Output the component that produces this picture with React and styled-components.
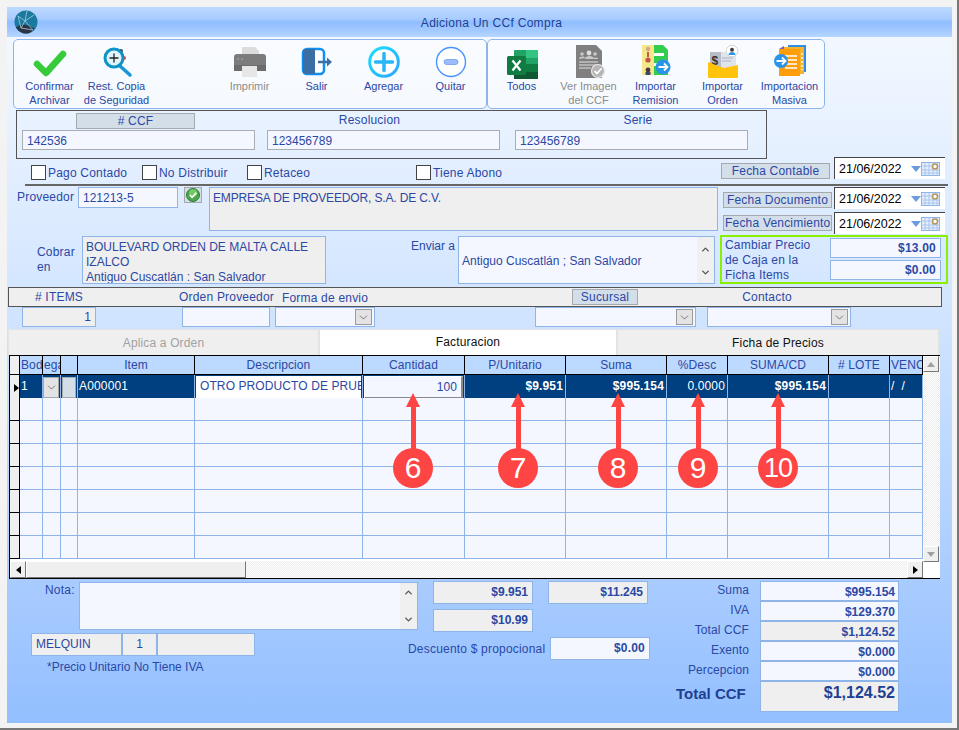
import React from "react";
import styled, { createGlobalStyle, css } from "styled-components";
import { ChevronDown, ChevronUp } from "lucide-react";

const BLUE_TEXT = "#2b48a4";
const FIELD_LINE = "#8fb4e8";
const FIELD_BG = "#f4f7ff";
const GRAY_BG = "#efefef";

const GlobalStyle = createGlobalStyle`
  html, body {
    margin: 0;
    padding: 0;
    background: #f3f3f3;
  }
  * {
    box-sizing: border-box;
  }
`;

const Page = styled.div`
  width: 959px;
  height: 730px;
  padding: 7px 0 0 7px;
  border-right: 2px solid #777;
  border-bottom: 2px solid #777;
  font-family: "Liberation Sans", Arial, sans-serif;
  font-size: 12px;
  color: ${BLUE_TEXT};
  overflow: hidden;
`;

const Win = styled.div`
  width: 945px;
  height: 716px;
  background: linear-gradient(180deg, #f6faff 0%, #cfe3ff 45%, #93bfff 100%);
  display: flex;
  flex-direction: column;
`;

const TitleBar = styled.div`
  height: 30px;
  flex: none;
  display: flex;
  align-items: center;
  padding: 0 0 0 7px;
  background: linear-gradient(180deg, #bddaff 0%, #a9cdff 38%, #8fbeff 50%, #a4caff 80%, #b6d6ff 100%);
  svg {
    flex: none;
  }
`;

const TitleText = styled.div`
  flex: 1;
  text-align: center;
  margin-left: -7px;
  padding-top: 1px;
  color: #1f3f92;
  font-size: 12px;
  letter-spacing: 0.3px;
`;

const Toolbar = styled.div`
  display: flex;
  flex: none;
  margin: 2px 0 0 6px;
  height: 70px;
`;

const ToolGroup = styled.div`
  width: ${(p) => p.$w}px;
  height: 70px;
  display: flex;
  padding: 5px 0 0 ${(p) => p.$pad}px;
  background: rgba(255, 255, 255, 0.55);
  border: 1px solid ${FIELD_LINE};
  border-radius: 5px;
`;

const ToolButton = styled.div`
  width: 67px;
  margin-left: ${(p) => p.$skip || 0}px;
  display: flex;
  flex-direction: column;
  align-items: center;
  text-align: center;
  font-size: 11px;
  line-height: 14px;
  color: ${(p) => (p.$off ? "#8c8c8c" : BLUE_TEXT)};
  white-space: pre-line;
  svg {
    display: block;
    width: 34px;
    height: 34px;
    flex: none;
  }
`;

const CcfBox = styled.div`
  flex: none;
  width: 751px;
  height: 49px;
  margin: 1px 0 0 9px;
  padding: 2px 0 0 5px;
  border: 1px solid #555;
  display: grid;
  grid-template-columns: 233px 233px 233px;
  column-gap: 12px;
`;

const CcfCol = styled.div`
  margin-left: ${(p) => p.$shift || 0}px;
  margin-right: -${(p) => p.$shift || 0}px;
  display: flex;
  flex-direction: column;
  align-items: center;
`;

const Tag = styled.div`
  width: ${(p) => (p.$w ? `${p.$w}px` : "auto")};
  height: ${(p) => p.$h || 16}px;
  flex: none;
  background: #d3dee9;
  border: 1px solid #a4a9ae;
  text-align: center;
  line-height: ${(p) => (p.$h || 16) - 2}px;
  font-size: 12px;
  white-space: nowrap;
  letter-spacing: 0.2px;
  overflow: hidden;
`;

const CcfTag = styled(Tag)`
  margin-right: 6px;
`;

const PlainHead = styled.div`
  height: 16px;
  line-height: 15px;
  flex: none;
  letter-spacing: 0.2px;
  margin-left: ${(p) => (p.$nudge > 0 ? p.$nudge : 0)}px;
  margin-right: ${(p) => (p.$nudge < 0 ? -p.$nudge : 0)}px;
`;

const Field = styled.div`
  width: ${(p) => (p.$w ? `${p.$w}px` : "100%")};
  height: ${(p) => p.$h || 20}px;
  flex: none;
  background: ${(p) => (p.$gray ? GRAY_BG : FIELD_BG)};
  border: 1px solid ${(p) => (p.$plain ? "#a9adb3" : FIELD_LINE)};
  padding: ${(p) => (p.$low ? 1 : 0)}px ${(p) => p.$pad ?? 4}px 0;
  line-height: ${(p) => (p.$h || 20) - 2}px;
  text-align: ${(p) => (p.$right ? "right" : p.$center ? "center" : "left")};
  font-weight: ${(p) => (p.$bold ? 700 : 400)};
  white-space: nowrap;
  overflow: hidden;
`;

const CcfInput = styled(Field)`
  margin-top: 1px;
  font-size: 12px;
`;

const NameBox = styled(Field)`
  line-height: 20px;
  padding-left: 3px;
  letter-spacing: -0.15px;
`;

const ChecksRow = styled.div`
  flex: none;
  height: 25px;
  padding-left: 24px;
  display: grid;
  grid-template-columns: 111px 105px 169px 305px 113px 111px;
  align-items: start;
`;

const Check = styled.div`
  display: flex;
  align-items: center;
  gap: 2px;
  margin-top: 6px;
  letter-spacing: 0.2px;
  white-space: nowrap;
  &::before {
    content: "";
    width: 13px;
    height: 13px;
    flex: none;
    background: #fff;
    border: 1px solid #444;
  }
`;

const DateWrap = styled.div`
  width: 111px;
  height: 22px;
  margin-top: ${(p) => p.$top || 0}px;
  flex: none;
  background: #fff;
  border-top: 1px solid #444;
  border-left: 1px solid #444;
  padding-left: 4px;
  display: flex;
  align-items: center;
  color: #000;
  font-size: 12.5px;
  white-space: nowrap;
`;

const DateIcons = styled.div`
  margin-left: 9px;
  display: flex;
  align-items: center;
  svg {
    display: block;
    flex: none;
  }
`;

const FormArea = styled.div`
  flex: none;
  margin-left: 18px;
  width: 923px;
  border-top: 2px solid #666;
`;

const ProvRow = styled.div`
  margin-left: -18px;
  width: 941px;
  height: 49px;
  padding: 1px 0 0 10px;
  display: flex;
  align-items: flex-start;
`;

const ProvLabel = styled.div`
  width: 61px;
  flex: none;
  letter-spacing: 0.2px;
  padding-top: 3px;
`;

const OkButton = styled.div`
  width: 18px;
  height: 16px;
  margin: 0 7px 0 6px;
  flex: none;
  background: #d3dee9;
  border: 1px solid #a4a9ae;
  display: flex;
  align-items: flex-start;
  justify-content: center;
`;

const FechaCol = styled.div`
  margin-left: 5px;
  width: 222px;
  flex: none;
  display: grid;
  grid-template-columns: 109px 111px;
  column-gap: 2px;
  align-items: start;
`;

const FechaTag = styled(Tag)`
  margin-top: ${(p) => p.$top}px;
  padding: 0 1px;
`;

const AddrRow = styled.div`
  flex: none;
  height: 52px;
  padding: 1px 0 0 30px;
  display: flex;
  align-items: flex-start;
`;

const CobrarLabel = styled.div`
  width: 45px;
  flex: none;
  padding-top: 9px;
  line-height: 15px;
  white-space: pre-line;
  letter-spacing: 0.2px;
`;

const AddrBox = styled.div`
  width: ${(p) => p.$w}px;
  height: 48px;
  flex: none;
  overflow: hidden;
  background: ${(p) => (p.$gray ? GRAY_BG : FIELD_BG)};
  border: 1px solid ${FIELD_LINE};
  padding: ${(p) => p.$top || 1}px 3px 0;
  line-height: 15px;
  display: flex;
  justify-content: space-between;
`;

const EnviarLabel = styled.div`
  width: 47px;
  margin-left: 85px;
  padding-top: 3px;
  flex: none;
`;

const UpDown = styled.div`
  width: ${(p) => p.$w || 17}px;
  flex: none;
  align-self: stretch;
  margin: -${(p) => p.$top || 0}px -3px 0 0;
  background: #f0f0f0;
  display: flex;
  flex-direction: column;
  justify-content: space-between;
  align-items: center;
  padding: 7px 0 5px;
  color: #555;
`;

const GreenBox = styled.div`
  width: 228px;
  height: 49px;
  margin: -1px 0 0 5px;
  flex: none;
  border: 2px solid #88f000;
  padding: 1px 5px 0 3px;
  display: grid;
  grid-template-columns: 105px 111px;
  line-height: 15px;
  letter-spacing: 0.2px;
`;

const PriceCol = styled.div`
  display: flex;
  flex-direction: column;
  gap: 2px;
`;

const HeadBar = styled.div`
  flex: none;
  width: 934px;
  height: 20px;
  margin: 0 0 0 1px;
  background: ${GRAY_BG};
  border: 1px solid #555;
  display: flex;
  letter-spacing: 0.2px;
  white-space: nowrap;
`;

const BarHead = styled.div`
  width: ${(p) => p.$w}px;
  margin-left: ${(p) => p.$left || 0}px;
  flex: none;
  padding-top: ${(p) => p.$top ?? 2}px;
  text-align: center;
`;

const BarTag = styled(Tag)`
  margin: 1px 0 0 195px;
`;

const InputsRow = styled.div`
  flex: none;
  height: 22px;
  display: flex;
  padding-left: 15px;
`;

const Combo = styled.div`
  width: ${(p) => p.$w}px;
  height: ${(p) => p.$h || 20}px;
  margin-left: ${(p) => p.$left || 0}px;
  flex: none;
  background: ${FIELD_BG};
  border: 1px solid ${FIELD_LINE};
  display: flex;
  justify-content: flex-end;
  align-items: center;
  padding-right: 2px;
`;

const ComboButton = styled.div`
  width: 17px;
  height: 16px;
  background: #e3e3e3;
  border: 1px solid #9a9a9a;
  color: #444;
  display: flex;
  align-items: center;
  justify-content: center;
`;

const Tabs = styled.div`
  flex: none;
  height: 26px;
  margin-left: 1px;
  display: flex;
`;

const Tab = styled.div`
  width: ${(p) => p.$w}px;
  text-align: center;
  line-height: ${(p) => (p.$active ? 25 : 27)}px;
  letter-spacing: 0.15px;
  background: ${(p) => (p.$active ? "#fff" : GRAY_BG)};
  color: ${(p) => (p.$off ? "#a2a2a2" : "#111")};
  border: 1px solid #e3e3e3;
  border-bottom: 0;
`;

const GridPanel = styled.div`
  flex: none;
  position: relative;
  width: 931px;
  height: 224px;
  margin-left: 2px;
  background: #fff;
  border-top: 1px solid #000;
  border-left: 1px solid #000;
  border-bottom: 1px solid #000;
  display: flex;
  flex-direction: column;
`;

const GridTop = styled.div`
  height: 205px;
  flex: none;
  display: flex;
`;

const GridBody = styled.div`
  width: 913px;
  flex: none;
  overflow: hidden;
`;

const gridCols = "10px 23px 18px 17px 117px 168px 102px 101px 101px 61px 101px 61px 33px";

const HeadRow = styled.div`
  display: grid;
  grid-template-columns: ${gridCols};
  height: 19px;
`;

const HeadCell = styled.div`
  background: ${(p) => (p.$corner ? GRAY_BG : "#bcd9ff")};
  border-right: 1px solid #000;
  border-bottom: 1px solid #000;
  line-height: 19px;
  text-align: ${(p) => (p.$clip ? "left" : "center")};
  white-space: nowrap;
  overflow: hidden;
  letter-spacing: 0.1px;
  padding-left: ${(p) => (p.$clip ? 1 : 0)}px;
`;

const DataRow = styled.div`
  display: grid;
  grid-template-columns: ${gridCols};
  height: 23px;
`;

const Cell = styled.div`
  background: ${(p) => (p.$sel ? "#004080" : FIELD_BG)};
  color: ${(p) => (p.$sel ? "#fff" : BLUE_TEXT)};
  border-right: 1px solid ${FIELD_LINE};
  border-bottom: 1px solid ${FIELD_LINE};
  line-height: 22px;
  padding: 0 2px 0 1px;
  font-weight: ${(p) => (p.$bold ? 700 : 400)};
  text-align: ${(p) => (p.$right ? "right" : "left")};
  white-space: pre;
  overflow: hidden;
  letter-spacing: 0.15px;
`;

const RowMark = styled.div`
  background: ${GRAY_BG};
  border-right: 1px solid #000;
  border-bottom: 1px solid #000;
  display: flex;
  align-items: center;
  justify-content: flex-end;
  &::after {
    content: "";
    display: ${(p) => (p.$on ? "block" : "none")};
    border-left: 5px solid #000;
    border-top: 4px solid transparent;
    border-bottom: 4px solid transparent;
  }
`;

const ComboCell = styled.div`
  background: #004080;
  border-right: 1px solid ${FIELD_LINE};
  border-bottom: 1px solid ${FIELD_LINE};
  padding: 2px 1px 3px 0;
  display: flex;
`;

const ComboFace = styled.div`
  flex: 1;
  background: ${(p) => (p.$blank ? "#d3dee9" : "#e3e3e3")};
  border: 1px solid #a4a9ae;
  color: #444;
  margin-left: ${(p) => (p.$blank ? 1 : 0)}px;
  display: flex;
  align-items: center;
  justify-content: center;
`;

const EditCell = styled.div`
  background: #004080;
  border-right: 1px solid ${FIELD_LINE};
  border-bottom: 1px solid ${FIELD_LINE};
  padding: 1px 1px 2px 1px;
`;

const EditFace = styled.div`
  height: 100%;
  background: ${(p) => (p.$raised ? FIELD_BG : "#fff")};
  border: ${(p) => (p.$raised ? "1px solid #fff" : "0")};
  border-right: ${(p) => (p.$raised ? "2px solid #8a8a8a" : "0")};
  border-bottom: ${(p) => (p.$raised ? "2px solid #8a8a8a" : "0")};
  padding: 0 ${(p) => (p.$raised ? 4 : 2)}px 0 4px;
  line-height: 20px;
  text-align: ${(p) => (p.$raised ? "right" : "left")};
  white-space: nowrap;
  overflow: hidden;
  color: ${BLUE_TEXT};
  letter-spacing: 0.1px;
`;

const ditherTrack = css`
  background: repeating-conic-gradient(#fff 0 25%, #ececec 0 50%) 0 0 / 2px 2px;
`;

const VScroll = styled.div`
  width: 17px;
  height: 206px;
  flex: none;
  display: flex;
  flex-direction: column;
  justify-content: space-between;
  ${ditherTrack}
`;

const ScrollBtn = styled.div`
  width: 16px;
  height: ${(p) => p.$h || 16}px;
  flex: none;
  margin-left: ${(p) => (p.$end ? "auto" : 0)};
  background: ${GRAY_BG};
  border: 1px solid #fff;
  border-right: 1px solid #777;
  border-bottom: 1px solid #777;
  display: flex;
  align-items: center;
  justify-content: center;
  color: ${(p) => (p.$dim ? "#a0a0a0" : "#000")};
`;

const triangles = {
  left: css`
    border-right: 5px solid currentColor;
    border-top: 4px solid transparent;
    border-bottom: 4px solid transparent;
  `,
  right: css`
    border-left: 5px solid currentColor;
    border-top: 4px solid transparent;
    border-bottom: 4px solid transparent;
  `,
  up: css`
    border-bottom: 5px solid currentColor;
    border-left: 4px solid transparent;
    border-right: 4px solid transparent;
  `,
  down: css`
    border-top: 5px solid currentColor;
    border-left: 4px solid transparent;
    border-right: 4px solid transparent;
  `,
};

const Tri = styled.span`
  display: block;
  width: 0;
  height: 0;
  ${(p) => triangles[p.$dir]}
`;

const HScroll = styled.div`
  flex: none;
  height: 17px;
  width: 913px;
  display: flex;
  ${ditherTrack}
`;

const Thumb = styled.div`
  width: 220px;
  height: 17px;
  flex: none;
  background: ${GRAY_BG};
  border: 1px solid #fff;
  border-right: 1px solid #777;
  border-bottom: 1px solid #777;
`;

const Callout = styled.div`
  position: absolute;
  top: 37px;
  left: ${(p) => p.$x - 30}px;
  width: 40px;
  height: 95px;
  display: flex;
  flex-direction: column;
  align-items: center;
`;

const ArrowHead = styled.div`
  flex: none;
  border-bottom: 14px solid #ff4444;
  border-left: 7.5px solid transparent;
  border-right: 7.5px solid transparent;
`;

const ArrowShaft = styled.div`
  flex: none;
  width: 5px;
  height: 42px;
  background: #ff4444;
`;

const Badge = styled.div`
  flex: none;
  width: 40px;
  height: 40px;
  margin-top: -1px;
  border-radius: 50%;
  background: #ff4444;
  color: #fff;
  font-size: ${(p) => (p.$small ? 27 : 30)}px;
  line-height: 40px;
  text-align: center;
  letter-spacing: ${(p) => (p.$small ? -1 : 0)}px;
`;

const Bottom = styled.div`
  flex: 1;
  display: flex;
  align-items: flex-start;
  padding: 2px 0 0 24px;
`;

const LeftCol = styled.div`
  width: 387px;
  margin-top: 1px;
  flex: none;
`;

const NotaRow = styled.div`
  display: flex;
  padding-left: 14px;
`;

const NotaLabel = styled.div`
  width: 34px;
  padding-top: 1px;
  flex: none;
  letter-spacing: 0.2px;
`;

const NotaBox = styled.div`
  width: 339px;
  height: 48px;
  flex: none;
  background: ${FIELD_BG};
  border: 1px solid ${FIELD_LINE};
  display: flex;
  justify-content: flex-end;
`;

const NotaScroll = styled(UpDown)`
  margin: 0;
  padding: 4px 0 4px;
`;

const UserRow = styled.div`
  display: flex;
  margin-top: 3px;
`;

const FootNote = styled.div`
  margin: 4px 0 0 16px;
`;

const MidCol = styled.div`
  width: 232px;
  flex: none;
  display: flex;
  flex-direction: column;
  gap: 5px;
  padding-left: 15px;
`;

const MidRow = styled.div`
  display: flex;
  gap: 15px;
`;

const DiscountRow = styled.div`
  display: flex;
  align-items: center;
  margin-left: -25px;
  letter-spacing: 0.2px;
  white-space: nowrap;
  justify-content: space-between;
  width: 242px;
`;

const RightCol = styled.div`
  margin-left: 10px;
  display: grid;
  grid-template-columns: 89px 139px;
  column-gap: 11px;
  grid-auto-rows: 20px;
`;

const TotalLabel = styled.div`
  text-align: right;
  line-height: 19px;
  letter-spacing: 0.1px;
`;

const BigLabel = styled.div`
  padding: 4px 0 0 16px;
  font-size: 15px;
  font-weight: 700;
  color: #1f3f92;
  white-space: nowrap;
`;

const BigValue = styled.div`
  height: 31px;
  background: ${GRAY_BG};
  border: 1px solid ${FIELD_LINE};
  padding: 2px 3px 0 0;
  text-align: right;
  font-size: 16px;
  font-weight: 700;
  color: #1f3f92;
`;

const LogoIcon = () => (
  <svg width="24" height="24" viewBox="0 0 24 24">
    <circle cx="12" cy="12" r="11.5" fill="#1a7a9f" />
    <path d="M2 17.500c3-2.600 7-3 10-2.500s6 2 8.500 3.500c-2 3-5 5-8.500 5s-7.500-2-10-6z" fill="#2b3442" />
    <path d="M4 6l7 5 9-6M4 6l3 12M11 11l8 9M11 11l-4 7 12 2M13 1l-2 10" fill="none" stroke="#a9cce0" strokeWidth=".8" />
  </svg>
);

const CheckIcon = () => (
  <svg viewBox="0 0 34 34">
    <path d="M4 19l9 9 17-19" fill="none" stroke="#37cb3a" strokeWidth="6.500" strokeLinecap="round" strokeLinejoin="round" />
  </svg>
);

const RestoreIcon = () => (
  <svg viewBox="0 0 34 34">
    <circle cx="21" cy="6" r="2" fill="#444" />
    <circle cx="24" cy="13" r="2" fill="#ee4444" />
    <path d="M20 21l10 9" stroke="#1896d8" strokeWidth="3.500" strokeLinecap="round" />
    <circle cx="14" cy="13" r="9" fill="#dff4fb" stroke="#0c93c8" strokeWidth="3" />
    <path d="M14 8.500v9M9.500 13h9" stroke="#222" strokeWidth="1.300" />
  </svg>
);

const PrinterIcon = () => (
  <svg viewBox="0 0 34 34">
    <path d="M9 2h13l4 4v7H9z" fill="#dcdcdc" />
    <rect x="1" y="9" width="32" height="17" rx="3" fill="#7c7c7c" />
    <rect x="1" y="20" width="32" height="6" fill="#6c6c6c" />
    <circle cx="5" cy="14" r="1" fill="#9c9c9c" />
    <circle cx="9" cy="14" r="1" fill="#9c9c9c" />
    <rect x="9" y="21" width="15" height="11" fill="#e6e6e6" />
  </svg>
);

const ExitIcon = () => (
  <svg viewBox="0 0 34 34">
    <rect x="3" y="4" width="21" height="25" rx="4" fill="#fff" stroke="#0d8ff5" strokeWidth="2.500" />
    <path d="M3 7a3 3 0 0 1 3-3h9v25H6a3 3 0 0 1-3-3z" fill="#3b6ea5" />
    <path d="M18 17h11" stroke="#3b6ea5" strokeWidth="2.500" />
    <path d="M27 12.500l5 4.500-5 4.500z" fill="#3b6ea5" />
  </svg>
);

const PlusIcon = () => (
  <svg viewBox="0 0 34 34">
    <defs>
      <linearGradient id="plusRing" x1="0" y1="0" x2="1" y2="1">
        <stop offset="0" stopColor="#16e0ff" />
        <stop offset="1" stopColor="#2ea6ff" />
      </linearGradient>
    </defs>
    <circle cx="17" cy="17" r="14.300" fill="#fff" stroke="url(#plusRing)" strokeWidth="3" />
    <path d="M17 8.500v17M8.500 17h17" stroke="#29b6f6" strokeWidth="3.500" strokeLinecap="round" />
  </svg>
);

const MinusIcon = () => (
  <svg viewBox="0 0 34 34">
    <circle cx="17" cy="17" r="14.500" fill="#fff" stroke="#4a94ff" strokeWidth="1.400" />
    <rect x="10" y="14.500" width="14" height="5" rx="2.500" fill="#9cbcff" stroke="#6f9cf0" strokeWidth=".8" />
  </svg>
);

const ExcelIcon = () => (
  <svg viewBox="0 0 34 34">
    <rect x="9" y="5" width="24" height="29" rx="1" fill="#21a366" />
    <rect x="21" y="5" width="12" height="8" fill="#33c481" />
    <rect x="21" y="19" width="12" height="8" fill="#107c41" />
    <rect x="9" y="19" width="12" height="8" fill="#185c37" />
    <rect x="9" y="27" width="24" height="7" fill="#0f5a32" />
    <rect x="2" y="11" width="19" height="19" rx="1.500" fill="#107c41" />
    <path d="M7.500 15.500l8 10M15.500 15.500l-8 10" stroke="#fff" strokeWidth="2.200" />
  </svg>
);

const DocCheckIcon = () => (
  <svg viewBox="0 0 34 34">
    <path d="M4 0h20l6 6v27H4z" fill="#7f7f7f" />
    <circle cx="10" cy="9" r="1.800" fill="#c9c9c9" />
    <circle cx="17" cy="8" r="2.400" fill="#dedede" />
    <circle cx="23" cy="9" r="1.800" fill="#c9c9c9" />
    <path d="M7 14c0-3 6-3 6-1M13 14c0-4 9-4 9 0M21 14c1-2 5-2 5 0z" fill="#c9c9c9" />
    <path d="M7 17h19M7 20h19M7 23h12" stroke="#e4e4e4" strokeWidth="1" />
    <circle cx="26" cy="26" r="6.500" fill="#b5b5b5" stroke="#e9e9e9" strokeWidth="1.200" />
    <path d="M22.500 26l2.500 2.500 4.500-5" fill="none" stroke="#fff" strokeWidth="1.800" />
  </svg>
);

const RemisionIcon = () => (
  <svg viewBox="0 0 34 34">
    <rect x="3" y="0" width="12" height="30" fill="#f3e88a" />
    <path d="M15 0h9l5 5v25H15z" fill="#33cc4e" />
    <rect x="15" y="8" width="10" height="3" fill="#fff" />
    <rect x="15" y="18" width="10" height="3" fill="#fff" />
    <circle cx="9" cy="4" r="2.200" fill="#d9a58a" />
    <rect x="8" y="7" width="2" height="5" fill="#c9594b" />
    <circle cx="9" cy="15" r="2.600" fill="#c9504b" />
    <circle cx="9" cy="25" r="2.400" fill="#4a3540" />
    <rect x="6.500" y="27" width="5" height="3" fill="#3a4a6a" />
    <circle cx="24" cy="22" r="7.500" fill="#2a93ea" />
    <path d="M19.500 22h8M25 18.500l3.500 3.500-3.500 3.500" fill="none" stroke="#fff" strokeWidth="1.800" />
  </svg>
);

const OrdenIcon = () => (
  <svg viewBox="0 0 34 34">
    <rect x="4" y="7" width="26" height="18" fill="#dfe3ea" />
    <rect x="4" y="7" width="11" height="18" fill="#b7bcc6" />
    <text x="5.500" y="20" fontSize="12" fontWeight="700" fill="#333" fontFamily="Liberation Sans, sans-serif">$</text>
    <path d="M16 13h11M16 16h9" stroke="#a8b4c8" strokeWidth="1" />
    <circle cx="26" cy="6" r="5.800" fill="#fff" stroke="#cccccc" strokeWidth=".8" />
    <circle cx="26" cy="4.800" r="2" fill="#4a3a34" />
    <path d="M22.500 10c0-4 7-4 7 0z" fill="#2a93ea" />
    <path d="M2 17l13 5 3 1 14-3v12a1 1 0 0 1-1 1H3a1 1 0 0 1-1-1z" fill="#ffc30b" />
  </svg>
);

const MasivaIcon = () => (
  <svg viewBox="0 0 34 34">
    <rect x="15" y="0" width="18" height="27" fill="#2f8fe8" />
    <rect x="11" y="2" width="20" height="27" fill="#f7b32b" />
    <path d="M6 4h21v27H6z" fill="#ff9d0a" />
    <path d="M6 4l5-3v3z" fill="#7a5bd0" />
    <path d="M12 11h12M12 15h12M12 19h12M12 23h12" stroke="#fff" strokeWidth="1.500" />
    <path d="M29 8v17" stroke="#fff" strokeWidth="1.500" strokeDasharray="2 2" />
    <circle cx="8" cy="16" r="7" fill="#2a93ea" />
    <path d="M3.500 16h8M9 12.500l3.500 3.500-3.500 3.500" fill="none" stroke="#fff" strokeWidth="1.800" />
  </svg>
);

const CalendarIcon = () => (
  <svg width="19" height="14" viewBox="0 0 19 14">
    <rect x=".5" y=".5" width="18" height="13" fill="#e4edfb" stroke="#8fb4e8" />
    <path d="M4 0v14M8 0v14M12 0v14M16 0v14M0 4h19M0 8h19M0 11h19" stroke="#9dbcec" strokeWidth=".8" />
    <circle cx="14" cy="4.500" r="2.500" fill="#fff" stroke="#b8975a" strokeWidth="1.500" />
  </svg>
);

const DateBox = ({ top }) => (
  <DateWrap $top={top}>
    21/06/2022
    <DateIcons>
      <svg width="10" height="6" viewBox="0 0 10 6">
        <path d="M0 0h10L5 6z" fill="#6d9be0" />
      </svg>
      <CalendarIcon />
    </DateIcons>
  </DateWrap>
);

const OkIcon = () => (
  <svg width="14" height="14" viewBox="0 0 14 14">
    <circle cx="7" cy="7" r="6.500" fill="#4aa84a" stroke="#2d7a33" />
    <circle cx="7" cy="5" r="4" fill="#8fdc7f" opacity=".6" />
    <path d="M3.800 7l2.300 2.300 4.200-4.600" fill="none" stroke="#fff" strokeWidth="1.600" />
  </svg>
);

const ComboChevron = () => <ChevronDown size={13} strokeWidth={1.2} />;

const tools = [
  { label: "Confirmar\nArchivar", Icon: CheckIcon },
  { label: "Rest. Copia\nde Seguridad", Icon: RestoreIcon },
  { label: "Imprimir", Icon: PrinterIcon, off: true, skip: 66 },
  { label: "Salir", Icon: ExitIcon },
  { label: "Agregar", Icon: PlusIcon },
  { label: "Quitar", Icon: MinusIcon },
];

const tools2 = [
  { label: "Todos", Icon: ExcelIcon },
  { label: "Ver Imagen\ndel CCF", Icon: DocCheckIcon, off: true },
  { label: "Importar\nRemision", Icon: RemisionIcon },
  { label: "Importar\nOrden", Icon: OrdenIcon },
  { label: "Importacion\nMasiva", Icon: MasivaIcon },
];

const headers = ["Item", "Descripcion", "Cantidad", "P/Unitario", "Suma", "%Desc", "SUMA/CD", "# LOTE"];

const callouts = [
  { n: "6", x: 413 },
  { n: "7", x: 518 },
  { n: "8", x: 618 },
  { n: "9", x: 698 },
  { n: "10", x: 778, small: true },
];

const totals = [
  ["Suma", "$995.154"],
  ["IVA", "$129.370"],
  ["Total CCF", "$1,124.52", true],
  ["Exento", "$0.000"],
  ["Percepcion", "$0.000"],
];

const EmptyRow = () => (
  <DataRow>
    <RowMark />
    {Array.from({ length: 12 }).map((_, i) => (
      <Cell key={i} />
    ))}
  </DataRow>
);

const App = () => (
  <Page>
    <GlobalStyle />
    <Win>
      <TitleBar>
        <LogoIcon />
        <TitleText>Adiciona Un CCf Compra</TitleText>
      </TitleBar>

      <Toolbar>
        <ToolGroup $w={474} $pad={2}>
          {tools.map(({ label, Icon, off, skip }) => (
            <ToolButton key={label} $off={off} $skip={skip}>
              <Icon />
              {label}
            </ToolButton>
          ))}
        </ToolGroup>
        <ToolGroup $w={338} $pad={0}>
          {tools2.map(({ label, Icon, off }) => (
            <ToolButton key={label} $off={off}>
              <Icon />
              {label}
            </ToolButton>
          ))}
        </ToolGroup>
      </Toolbar>

      <CcfBox>
        <CcfCol>
          <CcfTag $w={119}># CCF</CcfTag>
          <CcfInput $plain $low>142536</CcfInput>
        </CcfCol>
        <CcfCol>
          <PlainHead $nudge={-28}>Resolucion</PlainHead>
          <CcfInput $plain $low>123456789</CcfInput>
        </CcfCol>
        <CcfCol $shift={3}>
          <PlainHead $nudge={13}>Serie</PlainHead>
          <CcfInput $plain $low>123456789</CcfInput>
        </CcfCol>
      </CcfBox>

      <ChecksRow>
        <Check>Pago Contado</Check>
        <Check>No Distribuir</Check>
        <Check>Retaceo</Check>
        <Check>Tiene Abono</Check>
        <FechaTag $top={4} $w={109}>Fecha Contable</FechaTag>
        <DateBox top={-2} />
      </ChecksRow>

      <FormArea>
        <ProvRow>
          <ProvLabel>Proveedor</ProvLabel>
          <Field $w={100} $h={21} $low>121213-5</Field>
          <OkButton>
            <OkIcon />
          </OkButton>
          <NameBox $w={509} $h={44} $gray>EMPRESA DE PROVEEDOR, S.A. DE C.V.</NameBox>
          <FechaCol>
            <FechaTag $top={5} $w={109}>Fecha Documento</FechaTag>
            <DateBox top={0} />
            <FechaTag $top={6} $w={109}>Fecha Vencimiento</FechaTag>
            <DateBox top={3} />
          </FechaCol>
        </ProvRow>
      </FormArea>

      <AddrRow>
        <CobrarLabel>{"Cobrar\nen"}</CobrarLabel>
        <AddrBox $w={244} $gray $top={3}>
          <div>
            BOULEVARD ORDEN DE MALTA CALLE IZALCO
            <br />
            Antiguo Cuscatlán : San Salvador
          </div>
        </AddrBox>
        <EnviarLabel>Enviar a</EnviarLabel>
        <AddrBox $w={257} $top={17}>
          <div>Antiguo Cuscatlán ; San Salvador</div>
          <UpDown $top={17}>
            <ChevronUp size={11} strokeWidth={3} />
            <ChevronDown size={11} strokeWidth={3} />
          </UpDown>
        </AddrBox>
        <GreenBox>
          <div>
            Cambiar Precio
            <br />
            de Caja en la
            <br />
            Ficha Items
          </div>
          <PriceCol>
            <Field $right $bold>$13.00</Field>
            <Field $right $bold>$0.00</Field>
          </PriceCol>
        </GreenBox>
      </AddrRow>

      <HeadBar>
        <BarHead $w={100}># ITEMS</BarHead>
        <BarHead $w={94} $left={70}>Orden Proveedor</BarHead>
        <BarHead $w={104} $top={3}>Forma de envio</BarHead>
        <BarTag $w={66}>Sucursal</BarTag>
        <BarHead $w={258}>Contacto</BarHead>
      </HeadBar>

      <InputsRow>
        <Field $w={74} $right $gray>1</Field>
        <Combo $w={88} $left={86} />
        <Combo $w={100} $left={5}>
          <ComboButton><ComboChevron /></ComboButton>
        </Combo>
        <Combo $w={161} $left={160}>
          <ComboButton><ComboChevron /></ComboButton>
        </Combo>
        <Combo $w={144} $left={11}>
          <ComboButton><ComboChevron /></ComboButton>
        </Combo>
      </InputsRow>

      <Tabs>
        <Tab $w={311} $off>Aplica a Orden</Tab>
        <Tab $w={298} $active>Facturacion</Tab>
        <Tab $w={322}>Ficha de Precios</Tab>
      </Tabs>

      <GridPanel>
        <GridTop>
          <GridBody>
            <HeadRow>
              <HeadCell $corner />
              <HeadCell $clip>Bode</HeadCell>
              <HeadCell $clip>ega</HeadCell>
              <HeadCell />
              {headers.map((h) => (
                <HeadCell key={h}>{h}</HeadCell>
              ))}
              <HeadCell $clip>VENCE</HeadCell>
            </HeadRow>
            <DataRow>
              <RowMark $on />
              <Cell $sel>1</Cell>
              <ComboCell>
                <ComboFace><ComboChevron /></ComboFace>
              </ComboCell>
              <ComboCell>
                <ComboFace $blank />
              </ComboCell>
              <Cell $sel>A000001</Cell>
              <EditCell>
                <EditFace>OTRO PRODUCTO DE PRUEBA</EditFace>
              </EditCell>
              <EditCell>
                <EditFace $raised>100</EditFace>
              </EditCell>
              <Cell $sel $bold $right>$9.951</Cell>
              <Cell $sel $bold $right>$995.154</Cell>
              <Cell $sel $right>0.0000</Cell>
              <Cell $sel $bold $right>$995.154</Cell>
              <Cell $sel />
              <Cell $sel>{"/  /"}</Cell>
            </DataRow>
            {Array.from({ length: 7 }).map((_, i) => (
              <EmptyRow key={i} />
            ))}
          </GridBody>
          <VScroll>
            <ScrollBtn $dim><Tri $dir="up" /></ScrollBtn>
            <ScrollBtn $dim><Tri $dir="down" /></ScrollBtn>
          </VScroll>
        </GridTop>
        <HScroll>
          <ScrollBtn $h={17}><Tri $dir="left" /></ScrollBtn>
          <Thumb />
          <ScrollBtn $h={17} $end><Tri $dir="right" /></ScrollBtn>
        </HScroll>
        {callouts.map(({ n, x, small }) => (
          <Callout key={n} $x={x}>
            <ArrowHead />
            <ArrowShaft />
            <Badge $small={small}>{n}</Badge>
          </Callout>
        ))}
      </GridPanel>

      <Bottom>
        <LeftCol>
          <NotaRow>
            <NotaLabel>Nota:</NotaLabel>
            <NotaBox>
              <NotaScroll>
                <ChevronUp size={11} strokeWidth={3} />
                <ChevronDown size={11} strokeWidth={3} />
              </NotaScroll>
            </NotaBox>
          </NotaRow>
          <UserRow>
            <Field $w={91} $h={23} $gray>MELQUIN</Field>
            <Field $w={35} $h={23} $gray $center>1</Field>
            <Field $w={98} $h={23} $gray />
          </UserRow>
          <FootNote>*Precio Unitario No Tiene IVA</FootNote>
        </LeftCol>

        <MidCol>
          <MidRow>
            <Field $w={100} $h={23} $gray $right $bold>$9.951</Field>
            <Field $w={100} $h={23} $gray $right $bold>$11.245</Field>
          </MidRow>
          <MidRow>
            <Field $w={100} $h={23} $gray $right $bold>$10.99</Field>
          </MidRow>
          <DiscountRow>
            Descuento $ propocional
            <Field $w={100} $h={23} $right $bold>$0.00</Field>
          </DiscountRow>
        </MidCol>

        <RightCol>
          {totals.map(([label, value, gray]) => (
            <React.Fragment key={label}>
              <TotalLabel>{label}</TotalLabel>
              <Field $h={20} $pad={3} $low $right $bold $gray={gray}>{value}</Field>
            </React.Fragment>
          ))}
          <BigLabel>Total CCF</BigLabel>
          <BigValue>$1,124.52</BigValue>
        </RightCol>
      </Bottom>
    </Win>
  </Page>
);

export default App;
